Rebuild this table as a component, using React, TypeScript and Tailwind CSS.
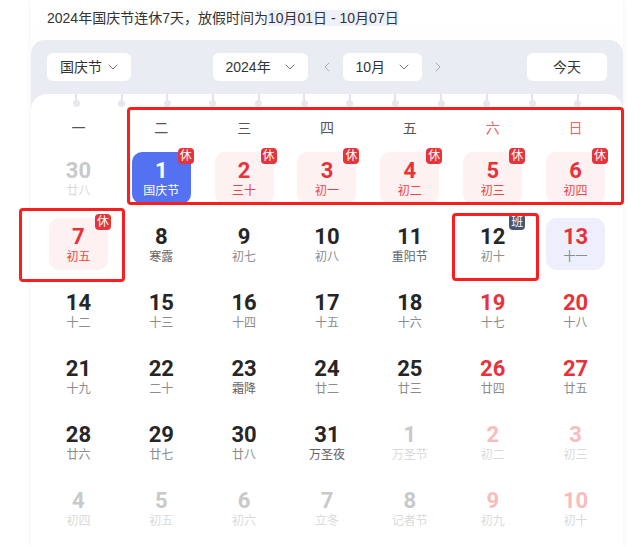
import React from "react";
import { ChevronDown, ChevronLeft, ChevronRight } from "lucide-react";

type Day = {
  n: number;
  lunar: string;
  kind?: "prev" | "next";
  weekend?: boolean;
  badge?: "休" | "班";
  style?: "selected" | "holiday" | "today";
  fest?: boolean;
};

const weekdays = ["一", "二", "三", "四", "五", "六", "日"];

const rows: Day[][] = [
  [
    { n: 30, lunar: "廿八", kind: "prev" },
    { n: 1, lunar: "国庆节", badge: "休", style: "selected" },
    { n: 2, lunar: "三十", badge: "休", style: "holiday" },
    { n: 3, lunar: "初一", badge: "休", style: "holiday" },
    { n: 4, lunar: "初二", badge: "休", style: "holiday" },
    { n: 5, lunar: "初三", badge: "休", style: "holiday" },
    { n: 6, lunar: "初四", badge: "休", style: "holiday" },
  ],
  [
    { n: 7, lunar: "初五", badge: "休", style: "holiday" },
    { n: 8, lunar: "寒露", fest: true },
    { n: 9, lunar: "初七" },
    { n: 10, lunar: "初八" },
    { n: 11, lunar: "重阳节", fest: true },
    { n: 12, lunar: "初十", badge: "班" },
    { n: 13, lunar: "十一", weekend: true, style: "today" },
  ],
  [
    { n: 14, lunar: "十二" },
    { n: 15, lunar: "十三" },
    { n: 16, lunar: "十四" },
    { n: 17, lunar: "十五" },
    { n: 18, lunar: "十六" },
    { n: 19, lunar: "十七", weekend: true },
    { n: 20, lunar: "十八", weekend: true },
  ],
  [
    { n: 21, lunar: "十九" },
    { n: 22, lunar: "二十" },
    { n: 23, lunar: "霜降", fest: true },
    { n: 24, lunar: "廿二" },
    { n: 25, lunar: "廿三" },
    { n: 26, lunar: "廿四", weekend: true },
    { n: 27, lunar: "廿五", weekend: true },
  ],
  [
    { n: 28, lunar: "廿六" },
    { n: 29, lunar: "廿七" },
    { n: 30, lunar: "廿八" },
    { n: 31, lunar: "万圣夜", fest: true },
    { n: 1, lunar: "万圣节", kind: "next" },
    { n: 2, lunar: "初二", kind: "next", weekend: true },
    { n: 3, lunar: "初三", kind: "next", weekend: true },
  ],
  [
    { n: 4, lunar: "初四", kind: "next" },
    { n: 5, lunar: "初五", kind: "next" },
    { n: 6, lunar: "初六", kind: "next" },
    { n: 7, lunar: "立冬", kind: "next" },
    { n: 8, lunar: "记者节", kind: "next" },
    { n: 9, lunar: "初九", kind: "next", weekend: true },
    { n: 10, lunar: "初十", kind: "next", weekend: true },
  ],
];

function DayCell({ d }: { d: Day }) {
  let box = "";
  let num = "text-[#262626]";
  let lun = "text-[#8c8c8c]";

  if (d.style === "selected") {
    box = "bg-[#5471f2]";
    num = "text-white";
    lun = "text-white";
  } else if (d.style === "holiday") {
    box = "bg-[#fdf1f1]";
    num = "text-[#e8323a]";
    lun = "text-[#ee4449]";
  } else if (d.style === "today") {
    box = "bg-[#edeffd]";
    num = "text-[#e8323a]";
  } else if (d.kind) {
    num = d.weekend ? "text-[#f8bcbc]" : "text-[#c9c9c9]";
    lun = "text-[#dadada]";
  } else if (d.weekend) {
    num = "text-[#e8323a]";
  } else if (d.fest) {
    lun = "text-[#666666]";
  }

  return (
    <div className="flex justify-center">
      <div className={`relative w-[59px] h-[52px] rounded-[10px] flex flex-col items-center ${box}`}>
        <span
          className={`mt-[7px] text-[22px] leading-[24px] font-bold ${num}`}
          style={{ fontFamily: "Roboto, sans-serif" }}
        >
          {d.n}
        </span>
        <span className={`text-[12px] leading-[16px] ${lun}`}>{d.lunar}</span>
        {d.badge && (
          <span
            className={`absolute -top-[4px] -right-[3px] w-[16px] h-[16px] rounded-[4px] flex items-center justify-center text-[12px] leading-none text-white ${
              d.badge === "休" ? "bg-[#e5353a]" : "bg-[#4b5571]"
            }`}
          >
            {d.badge}
          </span>
        )}
      </div>
    </div>
  );
}

function Select({ label, w }: { label: string; w: string }) {
  return (
    <div className={`h-[28px] ${w} bg-white rounded-[6px] flex items-center justify-between pl-[13px] pr-[10px] text-[14px] text-[#333]`}>
      <span>{label}</span>
      <ChevronDown size={16} strokeWidth={1.5} className="text-[#777]" />
    </div>
  );
}

export default function App() {
  return (
    <div
      className="relative w-[641px] h-[547px] overflow-hidden bg-white"
      style={{ fontFamily: '"Liberation Sans", "Noto Sans CJK SC", sans-serif' }}
    >
      <div className="ml-[31px] w-[592px] h-full bg-gradient-to-b from-white to-[#f4f5fb] shadow-[0_0_6px_rgba(0,0,0,0.06)]">
        {/* top text */}
        <div className="h-[40px] pt-[8px] pl-[16px] text-[14px] leading-[20px] text-[#333]">
          2024年国庆节连休7天，放假时间为<span className="bg-[#eef0fa]">10月01日 - 10月07日</span>
        </div>

        {/* calendar */}
        <div className="bg-[#e9ecf3] rounded-t-[14px]">
          <div className="grid grid-cols-[1fr_auto_1fr] items-center h-[54px] px-[16px] py-[13px] box-content" style={{ height: 28 }}>
            <div>
              <Select label="国庆节" w="w-[84px]" />
            </div>
            <div className="flex items-center pl-[4px]">
              <Select label="2024年" w="w-[95px]" />
              <ChevronLeft size={16} strokeWidth={1.5} className="text-[#aaa] ml-[11px] mr-[8px]" />
              <Select label="10月" w="w-[79px]" />
              <ChevronRight size={16} strokeWidth={1.5} className="text-[#aaa] ml-[8px]" />
            </div>
            <div className="flex justify-end">
              <div className="h-[28px] w-[80px] bg-white rounded-[6px] flex items-center justify-center text-[14px] text-[#333]">
                今天
              </div>
            </div>
          </div>

          <div className="bg-white rounded-t-[16px] h-[460px]">
            {/* rings */}
            <div className="flex justify-between px-[41.5px] h-[13px]">
              {Array.from({ length: 12 }).map((_, i) => (
                <div key={i} className="flex flex-col items-center w-[7px]">
                  <div className="w-[2px] h-[6px] bg-[#e1e4ec]" />
                  <div className="w-[7px] h-[7px] rounded-full bg-[#e5e8ef]" />
                </div>
              ))}
            </div>

            <div className="px-[6px]">
              <div className="grid grid-cols-7 mt-[7px] h-[28px] items-center text-[14px]">
                {weekdays.map((w, i) => (
                  <div key={w} className={`text-center ${i >= 5 ? "text-[#f06464]" : "text-[#555]"}`}>
                    {w}
                  </div>
                ))}
              </div>

              <div className="grid grid-cols-7 gap-y-[14px] mt-[10px]">
                {rows.flat().map((d, i) => (
                  <DayCell key={i} d={d} />
                ))}
              </div>
            </div>
          </div>
        </div>
      </div>

      {/* annotation outlines */}
      <div className="absolute left-[127px] top-[107px] w-[497px] h-[98px] border-[3px] border-[#fa1e1e] rounded-[4px]" />
      <div className="absolute left-[19px] top-[208px] w-[106px] h-[74px] border-[3px] border-[#fa1e1e] rounded-[4px]" />
      <div className="absolute left-[452px] top-[213px] w-[87px] h-[68px] border-[3px] border-[#fa1e1e] rounded-[4px]" />
    </div>
  );
}
